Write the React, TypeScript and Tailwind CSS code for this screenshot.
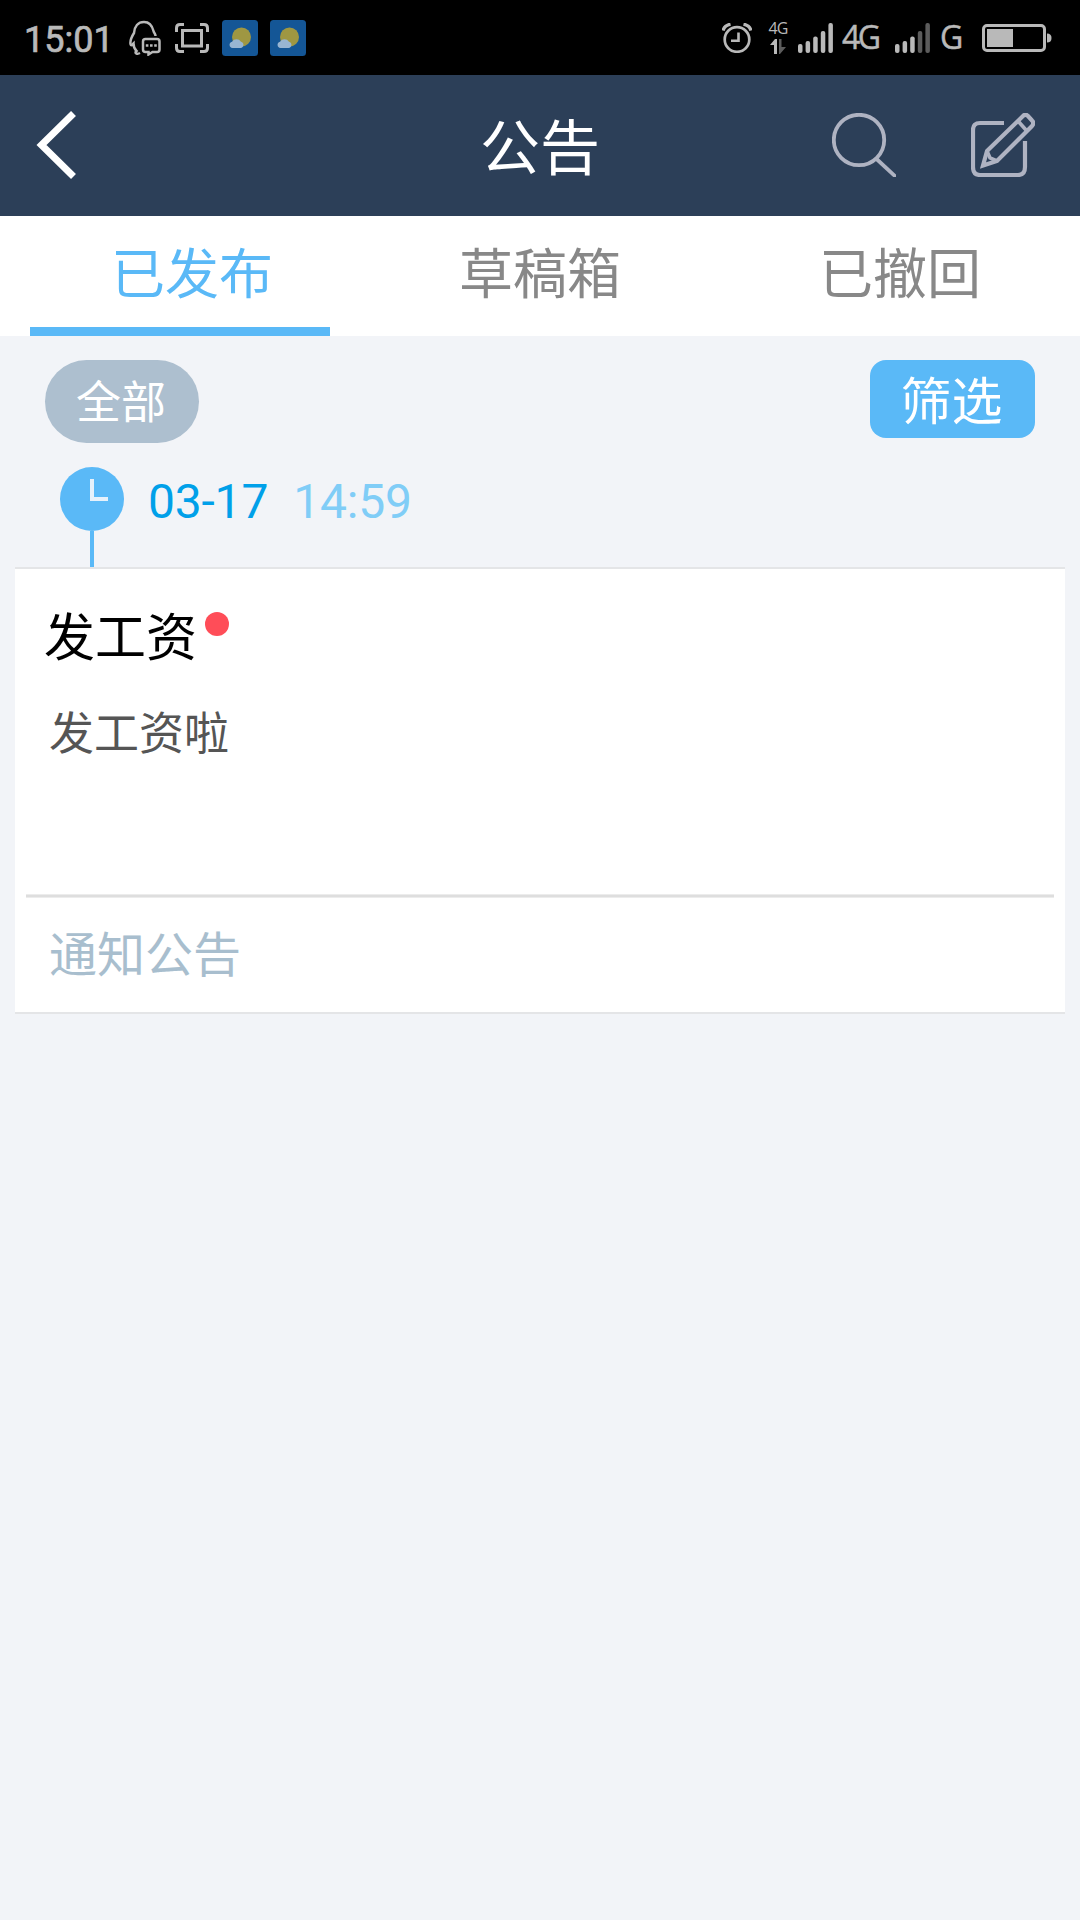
import { useState } from "react";

const tabs = [
  { key: "published", label: "已发布", className: "pl-6" },
  { key: "drafts", label: "草稿箱", className: "" },
  { key: "revoked", label: "已撤回", className: "" },
];

function ChatIcon() {
  return (
    <svg width="32" height="36" viewBox="0 0 32 36" fill="none" stroke="#b9b9b9" strokeWidth="2.500" className="ml-5">
      <path d="M26.500 16C26.500 14 25 13 24.500 11C23 5 19.500 2 15 2C9 2 5.500 6.500 5 13C2.500 17 1 21 1.500 24C2 26 3 25 4.500 23.500C4.500 27 5.500 29 7.500 31C5 33 8 34.500 11 33" />
      <path d="M16.500 19H28Q30.500 19 30.500 21.500V29.500Q30.500 32 28 32H23.500L19.500 34.500V32H16.500Q14 32 14 29.500V21.500Q14 19 16.500 19Z" />
      <path d="M16.800 25.500H19.400M21 25.500H23.600M25.200 25.500H27.800" strokeWidth="2.600" />
    </svg>
  );
}

function CaptureIcon() {
  return (
    <svg width="34" height="30" viewBox="0 0 34 30" fill="none" stroke="#b9b9b9" strokeWidth="3" className="ml-[14px] mt-px">
      <path d="M1.500 9V5Q1.500 1.500 5 1.500H9M25 1.500H29Q32.500 1.500 32.500 5V9M32.500 21V25Q32.500 28.500 29 28.500H25M9 28.500H5Q1.500 28.500 1.500 25V21" />
      <rect x="7.500" y="7.500" width="19" height="15.500" />
    </svg>
  );
}

function WeatherIcon() {
  return (
    <svg width="36" height="36" viewBox="0 0 36 36">
      <rect width="36" height="36" rx="3.500" fill="#145696" />
      <circle cx="19.500" cy="17" r="9.500" fill="#9f9742" />
      <path d="M10.500 28A3.200 3.200 0 0 1 10 21.700A5.500 5.500 0 0 1 19 21.700A3.200 3.200 0 0 1 18.500 28Z" fill="#98b5d2" />
    </svg>
  );
}

function AlarmIcon() {
  return (
    <svg width="30" height="30" viewBox="0 0 30 30" fill="none" stroke="#b9b9b9">
      <circle cx="15" cy="16.500" r="12.300" strokeWidth="2.700" />
      <path d="M16.500 9.500V17.800H9" strokeWidth="2.600" />
      <path d="M1 7.500Q2.500 2.500 8.500 1.200M29 7.500Q27.500 2.500 21.500 1.200" strokeWidth="3.400" />
    </svg>
  );
}

function SignalIcon({ level }: { level: number }) {
  const bars = [9, 12, 16.5, 22, 30];
  return (
    <svg width="35" height="30" viewBox="0 0 35 30">
      {bars.map((h, i) => (
        <rect key={h} x={i * 7.6} y={30 - h} width="4.500" height={h} rx="2" fill={i < level ? "#b9b9b9" : "#5c5c5c"} />
      ))}
    </svg>
  );
}

function BatteryIcon() {
  return (
    <svg width="70" height="28" viewBox="0 0 70 28" className="ml-[19px]">
      <rect x="1.500" y="1.500" width="61" height="25" rx="3.500" fill="none" stroke="#b9b9b9" strokeWidth="3" />
      <rect x="5" y="5" width="26" height="18" fill="#b9b9b9" />
      <path d="M65 9.500Q69.500 9.500 69.500 14Q69.500 18.500 65 18.500Z" fill="#b9b9b9" />
    </svg>
  );
}

function StatusBar() {
  return (
    <div className="flex h-[75px] items-center justify-between bg-black pl-6 pr-[28px] font-['Roboto',sans-serif] text-[#b9b9b9]">
      <div className="flex items-center">
        <span className="w-[85px] pt-[5px] text-[36px] leading-none [-webkit-text-stroke:0.7px_#b9b9b9]">15:01</span>
        <ChatIcon />
        <CaptureIcon />
        <div className="ml-[13px] flex gap-3">
          <WeatherIcon />
          <WeatherIcon />
        </div>
      </div>
      <div className="flex items-center">
        <AlarmIcon />
        <div className="ml-4 flex w-5 flex-col items-center">
          <span className="font-['Open_Sans',sans-serif] text-[16px] leading-[15px] tracking-[-1px]">4G</span>
          <svg width="16" height="16" viewBox="0 0 16 16" className="mt-[3px]">
            <path d="M0 6L5 0H7V15H4V6Z" fill="#b9b9b9" />
            <path d="M9 0H11.500V8H16L10 15H9Z" fill="#5c5c5c" />
          </svg>
        </div>
        <div className="ml-[10px] flex items-center">
          <SignalIcon level={5} />
          <span className="ml-[9px] w-[38px] pb-px font-['Open_Sans',sans-serif] text-[32px] leading-none tracking-[-2.5px] [-webkit-text-stroke:0.5px_#b9b9b9]">4G</span>
        </div>
        <div className="ml-[15px] flex items-center">
          <SignalIcon level={3} />
          <span className="ml-[10px] w-[23px] pb-px font-['Open_Sans',sans-serif] text-[32px] leading-none [-webkit-text-stroke:0.5px_#b9b9b9]">G</span>
        </div>
        <BatteryIcon />
      </div>
    </div>
  );
}

function Header() {
  return (
    <header className="grid h-[141px] grid-cols-3 items-center bg-[#2c3f58] px-9 pb-px text-white">
      <svg width="40" height="70" viewBox="0 0 40 70" fill="none" stroke="#fff" strokeWidth="7">
        <path d="M37.500 3.500L5.500 35L37.500 66.500" />
      </svg>
      <h1 className="pb-[3px] text-center text-[60px] leading-[70px]">公告</h1>
      <div className="flex justify-end gap-[75px] pr-[9px]">
        <svg width="64" height="64" viewBox="0 0 64 64" fill="none" stroke="#afb3c2" strokeWidth="3.800">
          <circle cx="27" cy="27" r="25.200" />
          <path d="M44 45.500L64 64" />
        </svg>
        <svg width="64" height="64" viewBox="0 0 64 64" fill="none" stroke="#afb3c2" strokeWidth="4.200">
          <path d="M33 10H9Q2 10 2 17V54Q2 62 9 62H47Q54 62 54 54V28" />
          <path d="M16 38L52 3Q54.500 0.500 57 3L61 7.500Q63.500 10 61 13L26 48L12 52.500Z" />
          <path d="M47 8L55 17M16 38L19 45L26 48" strokeWidth="3.600" />
        </svg>
      </div>
    </header>
  );
}

export default function App() {
  const [activeTab, setActiveTab] = useState("published");

  return (
    <div className="min-h-[1920px] w-[1080px] bg-[#f2f4f8] font-['Noto_Sans_CJK_SC',sans-serif]">
      <StatusBar />
      <Header />

      <nav className="grid h-[120px] grid-cols-3 bg-white">
        {tabs.map((tab) => (
          <button key={tab.key} onClick={() => setActiveTab(tab.key)}
            className={`flex flex-col items-center justify-between ${
              activeTab === tab.key ? "text-[#5ab9f7]" : "text-[#888888]"
            }`}>
            <span className={`pt-[15px] text-[54px] leading-[80px] ${tab.className}`}>{tab.label}</span>
            {activeTab === tab.key && <span className="h-[9px] w-[300px] bg-[#5ab9f7]" />}
          </button>
        ))}
      </nav>

      <div className="flex items-start justify-between px-[45px] pt-6 text-white">
        <button className="h-[83px] w-[154px] rounded-full bg-[#adbfcf] pr-0.5 pb-1 text-[45px] leading-[76px]">全部</button>
        <button className="h-[78px] w-[165px] rounded-[16px] bg-[#5ab9f7] pr-0.5 pb-0.5 text-[51px] leading-[74px]">筛选</button>
      </div>

      <div className="mt-6 flex h-[100px] items-start pl-[60px] font-['Roboto',sans-serif] text-[48px]">
        <div className="flex flex-col items-center">
          <svg width="64" height="64" viewBox="0 0 64 64">
            <circle cx="32" cy="32" r="32" fill="#5ab9f7" />
            <path d="M32 12V32H48" fill="none" stroke="#e6f1fb" strokeWidth="4" />
          </svg>
          <span className="h-9 w-1 bg-[#5ab9f7]" />
        </div>
        <span className="ml-6 leading-[70px] tracking-[-0.2px] text-[#00a0e9]">03-17</span>
        <span className="ml-[25px] leading-[70px] tracking-[-0.2px] text-[#80cdf7]">14:59</span>
      </div>

      <article className="mx-[15px] h-[447px] border-y-2 border-[#e4e5e7] bg-white">
        <div className="flex items-start pl-[29px] pt-[28px]">
          <h2 className="text-[51px] leading-[74px] text-black">发工资</h2>
          <span className="ml-2 mt-[15px] size-6 rounded-full bg-[#ff4d58]" />
        </div>
        <p className="h-[223px] pl-[34px] pt-[27px] text-[45px] leading-[65px] text-[#555555]">发工资啦</p>
        <div className="mx-[11px] h-1 border-y border-[#ececec] bg-[#dedede]" />
        <p className="pl-[34px] pt-[18px] text-[48px] leading-[70px] text-[#a8bece]">通知公告</p>
      </article>
    </div>
  );
}
